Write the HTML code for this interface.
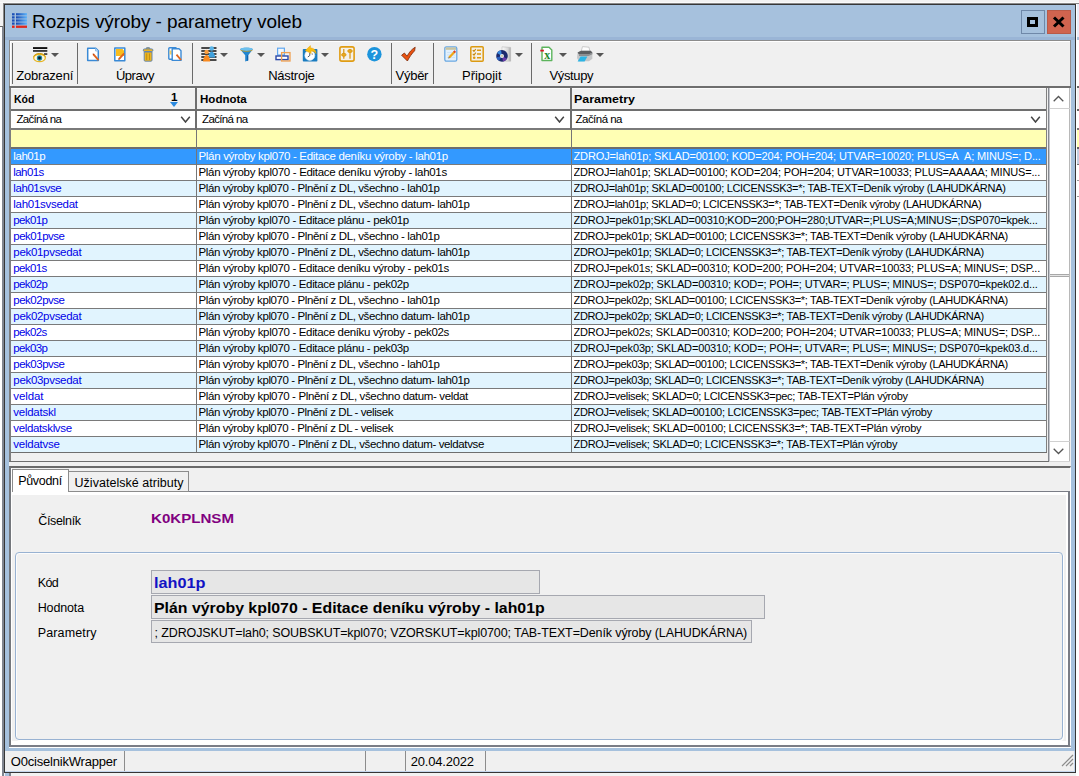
<!DOCTYPE html>
<html lang="cs"><head><meta charset="utf-8"><title>Rozpis výroby - parametry voleb</title>
<style>
*{box-sizing:border-box;margin:0;padding:0}
html,body{width:1079px;height:776px;overflow:hidden;background:#f2f2f2}
body{position:relative;font-family:"Liberation Sans",sans-serif;font-size:12px;color:#000}
.a{position:absolute}
.t{position:absolute;white-space:pre;line-height:16px;height:16px}
#win{left:4px;top:4px;width:1072px;height:769px;background:#a6c1dd;border:1px solid #363636}
#title{left:32px;top:9px;font-size:19px;line-height:24px;height:24px;letter-spacing:-0.2px;color:#000}
#tb{left:9px;top:40px;width:1062px;height:46px;background:#f0f0f0;border-left:1px solid #8c8c8c;border-top:1px solid #8c8c8c;border-right:1px solid #8c8c8c;box-shadow:inset 1px 1px 0 #fff}
.sep{position:absolute;top:43px;width:1px;height:41px;background:#6a6a6a}
.tl{position:absolute;top:67px;font-size:13px;line-height:16px;letter-spacing:-0.35px;white-space:pre;transform-origin:0 0}
.ic{position:absolute}
.dd{position:absolute;width:0;height:0;border-left:4px solid transparent;border-right:4px solid transparent;border-top:4px solid #555}
/* grid */
#grid{left:9px;top:86px;width:1062px;height:376px;background:#f0f0f0}
.r{position:absolute;left:11px;width:1035px;height:16px;background:#fff;border-bottom:1px solid #7a7a7a;font-size:11.5px;line-height:15px;white-space:pre}
.r.alt{background:#e1f4fe}
.r.sel{background:#3399ff;color:#fff}
.r span{position:absolute;top:0;height:15px;overflow:hidden}
.c1{left:2.300px;width:181px;color:#0000e8}
.sel .c1{color:#fff}
.c2{left:187.500px;width:370px}
.c3{left:562.500px;width:472px;font-size:11px}
.vl{position:absolute;width:2px;background:#6e6e6e}
.ft{font-size:11.5px;letter-spacing:-0.3px}
.lb{font-size:12.5px;letter-spacing:-0.3px}
.fld{background:#e6e6e6;border:1px solid #a6a8b0}
.sv{top:751px;width:1px;height:20px;background:#8c8c8c}

</style></head>
<body>
<div id="bgl" class="a" style="left:0;top:26px;width:4px;height:750px;background:#fff;border-top:1px solid #666;border-right:2px solid #80858f"></div>
<div class="a" style="left:0;top:2px;width:1079px;height:1px;background:#fafafa"></div>
<div class="a" style="left:3px;top:3px;width:1076px;height:1px;background:#8a8a8a"></div>
<div class="a" style="left:3px;top:3px;width:1px;height:24px;background:#8a8a8a"></div>
<div id="bgr" class="a" style="left:1076px;top:4px;width:3px;height:772px;background:#fff;border-left:1px solid #fff">
<div class="a" style="left:0;top:0px;width:2px;height:33px;background:#e8ecf8"></div>
<div class="a" style="left:0;top:33px;width:2px;height:3px;background:#a6c1dd"></div>
<div class="a" style="left:0;top:82px;width:2px;height:2px;background:#666"></div>
<div class="a" style="left:0;top:84px;width:2px;height:21px;background:#f0f0f0"></div>
<div class="a" style="left:0;top:105px;width:2px;height:2px;background:#666"></div>
<div class="a" style="left:0;top:124px;width:2px;height:2px;background:#777"></div>
<div class="a" style="left:0;top:126px;width:2px;height:17px;background:#ffffb0"></div>
<div class="a" style="left:0;top:143px;width:2px;height:2px;background:#666"></div>
<div class="a" style="left:0;top:145px;width:2px;height:15px;background:#c4cee0"></div>
<div class="a" style="left:0;top:160px;width:2px;height:1px;background:#777"></div>
<div class="a" style="left:0;top:176px;width:2px;height:1px;background:#999"></div>
<div class="a" style="left:0;top:192px;width:2px;height:1px;background:#999"></div>
</div>
<div class="a" style="left:5px;top:773px;width:4px;height:3px;background:#a6c1dd"></div>
<div class="a" style="left:9px;top:773px;width:2px;height:3px;background:#80858f"></div>
<div id="win" class="a"></div>
<div class="a" style="left:5px;top:37px;width:1070px;height:3px;background:#9ab5d6"></div>
<!-- title bar -->
<svg class="a" style="left:12px;top:13px" width="15" height="15" viewBox="0 0 15 15"><defs><linearGradient id="gbar" x1="0" x2="1"><stop offset="0" stop-color="#1848b0"/><stop offset="1" stop-color="#5cb4fc"/></linearGradient></defs><rect x="0" y="0.2" width="2.600" height="2.200" fill="#1c50b8"/><rect x="4" y="0.2" width="11" height="2.200" fill="url(#gbar)"/><rect x="0" y="3.3" width="2.600" height="2.200" fill="#1c50b8"/><rect x="4" y="3.3" width="11" height="2.200" fill="url(#gbar)"/><rect x="0" y="6.4" width="2.600" height="2.200" fill="#1c50b8"/><rect x="4" y="6.4" width="11" height="2.200" fill="url(#gbar)"/><rect x="0" y="9.5" width="2.600" height="2.200" fill="#1c50b8"/><rect x="4" y="9.5" width="11" height="2.200" fill="url(#gbar)"/><rect x="0" y="12.600" width="2.600" height="2.300" fill="#e22418"/><rect x="4" y="12.600" width="11" height="2.300" fill="#de2a1e"/></svg>
<div class="a" style="left:1021px;top:10px;width:24px;height:24px;border:1px solid #6f88a8;background:#a6c1dd"></div>
<div class="a" style="left:1027px;top:17px;width:11px;height:10px;border:3px solid #000"></div>
<div class="a" style="left:1047px;top:10px;width:24px;height:24px;border:1px solid #b85a48;background:#d0644f"></div>
<svg class="a" style="left:1052px;top:16px" width="14" height="12" viewBox="0 0 14 12"><path d="M2 1.500 L11.500 10.500 M11.500 1.500 L2 10.500" stroke="#000" stroke-width="3" fill="none"/></svg>
<!-- toolbar -->
<div id="tb" class="a"></div>
<div class="sep" style="left:12px"></div>
<div class="sep" style="left:77px"></div>
<div class="sep" style="left:192px"></div>
<div class="sep" style="left:391px"></div>
<div class="sep" style="left:433px"></div>
<div class="sep" style="left:531px"></div>
<div id="icons">
<!-- eye -->
<svg class="ic" style="left:32px;top:46px" width="17" height="17" viewBox="0 0 17 17"><rect x="1" y="1.100" width="14.300" height="1.900" fill="#111"/><rect x="1" y="4.200" width="14.300" height="1.500" fill="#111"/><rect x="12" y="7.300" width="3.300" height="1.500" fill="#222"/><ellipse cx="7.500" cy="11.800" rx="6.500" ry="4.500" fill="#e6b422"/><ellipse cx="7.500" cy="12" rx="5.200" ry="3.100" fill="#fff8e0"/><circle cx="7.500" cy="12" r="2.700" fill="#1d8aa8"/><circle cx="7.500" cy="12" r="1.400" fill="#0a1420"/><path d="M1.500 10.500c3-4 9-4 12 0" stroke="#c89a10" stroke-width="1" fill="none"/></svg>
<div class="dd" style="left:51px;top:53px"></div>
<!-- new -->
<svg class="ic" style="left:86px;top:47px" width="14" height="15" viewBox="0 0 14 15"><path d="M1.700 1.200h8l2.600 2.600v9.800H1.700z" fill="#fff" stroke="#3a8ad6" stroke-width="1.500" stroke-linejoin="round"/><path d="M9.500 1.200v2.800h2.800" fill="#cfe4f8" stroke="#7ab4e8" stroke-width=".8"/><path d="M7.200 7.200l5.300 6" stroke="#e0641c" stroke-width="1.900" fill="none"/><path d="M6.600 6.500l1.600 .6-1 .9z" fill="#a03010"/></svg>
<!-- edit -->
<svg class="ic" style="left:113px;top:47px" width="14" height="15" viewBox="0 0 14 15"><path d="M1.800 1h10v12.800h-10z" fill="#fff" stroke="#3a8ad6" stroke-width="1.500" stroke-linejoin="round"/><path d="M3 2h6.500l1.500 1.500v5.500H3z" fill="#f8bc1c"/><path d="M6 12l5.200-5.600" stroke="#e0641c" stroke-width="1.900"/><path d="M5.300 12.900l.4-1.600 1.100 1z" fill="#803010"/></svg>
<!-- trash -->
<svg class="ic" style="left:142px;top:47px" width="12" height="15" viewBox="0 0 12 15"><rect x="4.300" y=".6" width="3.400" height="1.800" rx=".6" fill="#e8b020" stroke="#5a80b0" stroke-width=".8"/><rect x="1.300" y="1.900" width="9.600" height="2.600" rx="1.200" fill="#ecb420" stroke="#5a80b0" stroke-width=".9"/><path d="M2.200 5h7.800v8.200q0 1-1 1h-5.800q-1 0-1-1z" fill="#ecb420" stroke="#5a80b0" stroke-width=".9"/><path d="M4.700 6.500v6.500M7.500 6.500v6.500" stroke="#c08c10" stroke-width=".9"/></svg>
<!-- copy -->
<svg class="ic" style="left:168px;top:47px" width="14" height="15" viewBox="0 0 14 15"><rect x=".8" y=".8" width="7.600" height="11.400" rx=".8" fill="#fff" stroke="#3a8ad6" stroke-width="1.400"/><rect x="1.600" y="3.500" width="2" height="4" fill="#f8d060"/><path d="M4.200 1.800h6.800l2 2v9.600H4.200z" fill="#fff" stroke="#3a8ad6" stroke-width="1.400" stroke-linejoin="round"/><path d="M8.500 7.600l4.500 5.400" stroke="#e0641c" stroke-width="1.800"/></svg>
<!-- people list -->
<svg class="ic" style="left:201px;top:46px" width="16" height="16" viewBox="0 0 16 16"><path d="M.3 2h15.200M.3 5h15.200M.3 8h15.200M.3 11h15.200M.3 14h15.200" stroke="#111" stroke-width="1.500"/><circle cx="10.700" cy="2.500" r="2.300" fill="#58b4e8"/><path d="M7.300 11.500c.3-3.500 1.800-6 3.400-6s3.100 2.500 3.400 6z" fill="#3ea0dc"/><circle cx="5.600" cy="5.900" r="2.200" fill="#fba040"/><path d="M2 15.500c.3-3.800 1.900-6.500 3.600-6.500s3.300 2.700 3.600 6.500z" fill="#f88a20"/></svg>
<div class="dd" style="left:220px;top:53px"></div>
<!-- funnel -->
<svg class="ic" style="left:240px;top:47px" width="13" height="15" viewBox="0 0 13 15"><path d="M.2 2.500C.2 0 12.800 0 12.800 2.500L8.200 8.300v5.200l-3 .9V8.300z" fill="#2286d0"/><ellipse cx="6.500" cy="2.300" rx="6.200" ry="1.700" fill="#6cc0ee"/><path d="M.6 3.200c3 1.600 8.800 1.600 11.800 0" stroke="#d0a020" stroke-width=".8" fill="none"/><path d="M7 8.300v5.400l1.200-.3V8.300z" fill="#1560a8"/></svg>
<div class="dd" style="left:257px;top:53px"></div>
<!-- windows -->
<svg class="ic" style="left:275px;top:47px" width="16" height="15" viewBox="0 0 16 15"><rect x="2.600" y="1.200" width="6.800" height="6.800" fill="#f4f8fc" stroke="#62a8f0" stroke-width="1.200"/><rect x="1" y="9" width="12" height="3.600" fill="#fff" stroke="#2a48a8" stroke-width="1.400"/><rect x="6.600" y="5.600" width="8.400" height="8.400" fill="none" stroke="#f0a050" stroke-width="1.300"/></svg>
<!-- clock -->
<svg class="ic" style="left:302px;top:45px" width="16" height="17" viewBox="0 0 16 17"><rect x=".8" y="4" width="14.600" height="12.600" rx=".8" fill="#1a7cc0"/><circle cx="7.800" cy="10.400" r="5" fill="#fff" stroke="#d8e8f4" stroke-width=".6"/><path d="M7.800 7.500v3l-2 1.500" stroke="#345" stroke-width=".9" fill="none"/><circle cx="10.300" cy="9" r=".6" fill="#345"/><path d="M3.2 5.6L8.4 .6l.3 2.3c3.4 0 5.6 2.6 5.4 5.8-1.200-2-3-2.700-5.100-2.500l.3 2.400z" fill="#f8bc10" stroke="#e8a008" stroke-width=".4"/></svg>
<div class="dd" style="left:321px;top:53px"></div>
<!-- sliders -->
<svg class="ic" style="left:339px;top:46px" width="16" height="16" viewBox="0 0 16 16"><rect x=".9" y=".9" width="14.200" height="14.200" rx="1.800" fill="#f4f1ea" stroke="#e09c12" stroke-width="1.600"/><path d="M4.800 3v9.800M11 3v9.800" stroke="#d8940c" stroke-width="1.200"/><ellipse cx="4.8" cy="8.8" rx="2.3" ry="1.5" fill="#e8a820" stroke="#d8940c" stroke-width=".8"/><ellipse cx="11" cy="5" rx="2.3" ry="1.5" fill="#e8a820" stroke="#d8940c" stroke-width=".8"/></svg>
<!-- help -->
<svg class="ic" style="left:367px;top:47px" width="15" height="15" viewBox="0 0 15 15"><circle cx="7.400" cy="7.200" r="7.200" fill="#1c94dc"/><text x="7.400" y="11.600" font-family="Liberation Sans, sans-serif" font-weight="bold" font-size="12.500" fill="#fff" text-anchor="middle">?</text></svg>
<!-- check -->
<svg class="ic" style="left:401px;top:46px" width="16" height="16" viewBox="0 0 16 16"><path d="M.6 9.200L3.400 7l2.600 3.200C8.200 6.200 10.800 3.200 14.200 1.200l-.6 3.600C10.800 7.600 8.600 10.800 6.400 15z" fill="#ea5210" stroke="#7a2808" stroke-width=".8" stroke-linejoin="round"/></svg>
<!-- notepad -->
<svg class="ic" style="left:444px;top:46px" width="14" height="16" viewBox="0 0 14 16"><rect x=".8" y=".8" width="12" height="14.400" rx="1.600" fill="#e2f0fc" stroke="#6aa8e2" stroke-width="1.300"/><rect x="1.600" y="1.400" width="10.400" height="2.400" fill="#c8c4a0"/><path d="M3 6.500h8M3 9h8M3 11.500h8" stroke="#c4dcf4" stroke-width=".7"/><path d="M5.200 11.600l5.400-5.800" stroke="#f0a818" stroke-width="2.200"/><path d="M10 6.400l1.200-1.300" stroke="#d84030" stroke-width="2.200"/><path d="M4.300 12.600l.5-1.500 1 .9z" fill="#604020"/></svg>
<!-- checklist -->
<svg class="ic" style="left:470px;top:46px" width="14" height="16" viewBox="0 0 14 16"><rect x=".8" y=".8" width="12.400" height="14.400" rx="1" fill="#f3f0e8" stroke="#dc9a10" stroke-width="1.500"/><path d="M7 4.300h4M7 8h4M7 11.700h4" stroke="#dc9a10" stroke-width="1.500"/><path d="M2.800 4.200l1.200 1.200 1.800-2.400M2.800 7.900l1.200 1.200 1.800-2.400" stroke="#c88a0c" stroke-width="1.100" fill="none"/><circle cx="4.200" cy="11.700" r="1.300" fill="#dc9a10"/></svg>
<!-- cd -->
<svg class="ic" style="left:496px;top:46px" width="16" height="16" viewBox="0 0 16 16"><defs><linearGradient id="gcase" x1="0" x2="1"><stop offset="0" stop-color="#fafafa"/><stop offset=".7" stop-color="#d8d8d8"/><stop offset="1" stop-color="#a8a8a8"/></linearGradient></defs><path d="M6 .8l8.600.6v13.800H6z" fill="url(#gcase)" stroke="#b4b4b4" stroke-width=".5"/><circle cx="6" cy="9.900" r="5.800" fill="#1c2a6c"/><path d="M6 9.900L1 7A5.800 5.800 0 0 1 5 4.200z" fill="#3a8ae0"/><path d="M6 9.900l5 2.900A5.800 5.800 0 0 1 7 15.600z" fill="#6a3aa8"/><path d="M6 9.900L.4 11.500A5.800 5.800 0 0 0 3 14.800z" fill="#2a60c0"/><circle cx="6" cy="9.900" r="2" fill="#e8ecf0"/><circle cx="6" cy="9.900" r=".9" fill="#c8c090"/></svg>
<div class="dd" style="left:515px;top:53px"></div>
<!-- excel -->
<svg class="ic" style="left:540px;top:46px" width="13" height="16" viewBox="0 0 13 16"><path d="M2 1.300h7l2.800 2.800v10.400H2z" fill="#fff" stroke="#5cb45c" stroke-width="1.400" stroke-linejoin="round"/><rect x=".3" y="3.700" width="3.600" height="1.800" fill="#d41c24"/><text x="7.200" y="13.400" font-family="Liberation Serif, serif" font-weight="bold" font-size="12" fill="#1e8a2e" text-anchor="middle">x</text></svg>
<div class="dd" style="left:559px;top:53px"></div>
<!-- printer -->
<svg class="ic" style="left:576px;top:46px" width="17" height="16" viewBox="0 0 17 16"><path d="M6.500 .6l6.500 .6 1 4.800H5z" fill="#fcfcfc" stroke="#b8b8b8" stroke-width=".7"/><path d="M1.600 6.600L5 4.800h9.800l1.600 2v6l-3.400 2.400H2.800L1 12z" fill="#c4c6c8"/><path d="M1.600 6.600L5 4.800h9.800l1.600 2-3.800 1.600H3z" fill="#5c5e60"/><path d="M3 8.400h9.600l3.800-1.800v1.600l-3.800 1.800H3z" fill="#8c8e90"/><path d="M4.600 10.400h6.800l-2.800 5H1.600z" fill="#2cb4e4"/></svg>
<div class="dd" style="left:596px;top:53px"></div>
</div>
<!-- grid -->
<div id="grid" class="a"></div>
<div class="a" style="left:9px;top:86px;width:1062px;height:2px;background:#6e6e6e"></div>
<div class="a" style="left:9px;top:88px;width:2px;height:374px;background:#7e7e7e"></div>
<div class="a" style="left:11px;top:88px;width:1036px;height:21px;background:#f0f0f0;border-top:1px solid #fbfbfb"></div>
<div class="a" style="left:11px;top:109px;width:1036px;height:2px;background:#6e6e6e"></div>
<div class="a" style="left:11px;top:111px;width:1036px;height:17px;background:#fff"></div>
<div class="a" style="left:11px;top:128px;width:1036px;height:2px;background:#7a7a7a"></div>
<div class="a" style="left:11px;top:130px;width:1036px;height:17px;background:#ffffb4"></div>
<div class="a" style="left:11px;top:147px;width:1036px;height:2px;background:#6e6e6e"></div>
<div class="a" style="left:170px;top:102px;width:0;height:0;border-left:4.5px solid transparent;border-right:4.5px solid transparent;border-top:5px solid #2a8ae0"></div>
<svg class="a" style="left:179.500px;top:116px" width="11" height="7" viewBox="0 0 11 7"><path d="M1.200.7L5.500 6 9.800.7" stroke="#444" stroke-width="1.500" fill="none"/></svg>
<svg class="a" style="left:553.500px;top:116px" width="11" height="7" viewBox="0 0 11 7"><path d="M1.200.7L5.500 6 9.800.7" stroke="#444" stroke-width="1.500" fill="none"/></svg>
<svg class="a" style="left:1029.500px;top:116px" width="11" height="7" viewBox="0 0 11 7"><path d="M1.200.7L5.500 6 9.800.7" stroke="#444" stroke-width="1.500" fill="none"/></svg>

<div id="rows">
<div class="r sel" style="top:149px"><span class="c1" style="letter-spacing:-0.424px">lah01p</span><span class="c2" style="letter-spacing:-0.312px">Plán výroby kpl070 - Editace deníku výroby - lah01p</span><span class="c3" style="letter-spacing:-0.121px">ZDROJ=lah01p; SKLAD=00100; KOD=204; POH=204; UTVAR=10020; PLUS=A&nbsp; A; MINUS=; D...</span></div>
<div class="r" style="top:165px"><span class="c1" style="letter-spacing:-0.582px">lah01s</span><span class="c2" style="letter-spacing:-0.320px">Plán výroby kpl070 - Editace deníku výroby - lah01s</span><span class="c3" style="letter-spacing:-0.163px">ZDROJ=lah01p; SKLAD=00100; KOD=204; POH=204; UTVAR=10033; PLUS=AAAAA; MINUS=...</span></div>
<div class="r alt" style="top:181px"><span class="c1" style="letter-spacing:-0.422px">lah01svse</span><span class="c2" style="letter-spacing:-0.396px">Plán výroby kpl070 - Plnění z DL, všechno - lah01p</span><span class="c3" style="letter-spacing:-0.307px">ZDROJ=lah01p; SKLAD=00100; LCICENSSK3=*; TAB-TEXT=Deník výroby (LAHUDKÁRNA)</span></div>
<div class="r" style="top:197px"><span class="c1" style="letter-spacing:-0.282px">lah01svsedat</span><span class="c2" style="letter-spacing:-0.396px">Plán výroby kpl070 - Plnění z DL, všechno datum- lah01p</span><span class="c3" style="letter-spacing:-0.320px">ZDROJ=lah01p; SKLAD=0; LCICENSSK3=*; TAB-TEXT=Deník výroby (LAHUDKÁRNA)</span></div>
<div class="r alt" style="top:213px"><span class="c1" style="letter-spacing:-0.622px">pek01p</span><span class="c2" style="letter-spacing:-0.340px">Plán výroby kpl070 - Editace plánu - pek01p</span><span class="c3" style="letter-spacing:-0.181px">ZDROJ=pek01p;SKLAD=00310;KOD=200;POH=280;UTVAR=;PLUS=A;MINUS=;DSP070=kpek...</span></div>
<div class="r" style="top:229px"><span class="c1" style="letter-spacing:-0.492px">pek01pvse</span><span class="c2" style="letter-spacing:-0.396px">Plán výroby kpl070 - Plnění z DL, všechno - lah01p</span><span class="c3" style="letter-spacing:-0.316px">ZDROJ=pek01p; SKLAD=00100; LCICENSSK3=*; TAB-TEXT=Deník výroby (LAHUDKÁRNA)</span></div>
<div class="r alt" style="top:245px"><span class="c1" style="letter-spacing:-0.302px">pek01pvsedat</span><span class="c2" style="letter-spacing:-0.396px">Plán výroby kpl070 - Plnění z DL, všechno datum- lah01p</span><span class="c3" style="letter-spacing:-0.329px">ZDROJ=pek01p; SKLAD=0; LCICENSSK3=*; TAB-TEXT=Deník výroby (LAHUDKÁRNA)</span></div>
<div class="r" style="top:261px"><span class="c1" style="letter-spacing:-0.649px">pek01s</span><span class="c2" style="letter-spacing:-0.340px">Plán výroby kpl070 - Editace deníku výroby - pek01s</span><span class="c3" style="letter-spacing:-0.166px">ZDROJ=pek01s; SKLAD=00310; KOD=200; POH=204; UTVAR=10033; PLUS=A; MINUS=; DSP...</span></div>
<div class="r alt" style="top:277px"><span class="c1" style="letter-spacing:-0.622px">pek02p</span><span class="c2" style="letter-spacing:-0.340px">Plán výroby kpl070 - Editace plánu - pek02p</span><span class="c3" style="letter-spacing:-0.156px">ZDROJ=pek02p; SKLAD=00310; KOD=; POH=; UTVAR=; PLUS=; MINUS=; DSP070=kpek02.d...</span></div>
<div class="r" style="top:293px"><span class="c1" style="letter-spacing:-0.492px">pek02pvse</span><span class="c2" style="letter-spacing:-0.396px">Plán výroby kpl070 - Plnění z DL, všechno - lah01p</span><span class="c3" style="letter-spacing:-0.316px">ZDROJ=pek02p; SKLAD=00100; LCICENSSK3=*; TAB-TEXT=Deník výroby (LAHUDKÁRNA)</span></div>
<div class="r alt" style="top:309px"><span class="c1" style="letter-spacing:-0.302px">pek02pvsedat</span><span class="c2" style="letter-spacing:-0.396px">Plán výroby kpl070 - Plnění z DL, všechno datum- lah01p</span><span class="c3" style="letter-spacing:-0.329px">ZDROJ=pek02p; SKLAD=0; LCICENSSK3=*; TAB-TEXT=Deník výroby (LAHUDKÁRNA)</span></div>
<div class="r" style="top:325px"><span class="c1" style="letter-spacing:-0.649px">pek02s</span><span class="c2" style="letter-spacing:-0.340px">Plán výroby kpl070 - Editace deníku výroby - pek02s</span><span class="c3" style="letter-spacing:-0.166px">ZDROJ=pek02s; SKLAD=00310; KOD=200; POH=204; UTVAR=10033; PLUS=A; MINUS=; DSP...</span></div>
<div class="r alt" style="top:341px"><span class="c1" style="letter-spacing:-0.622px">pek03p</span><span class="c2" style="letter-spacing:-0.340px">Plán výroby kpl070 - Editace plánu - pek03p</span><span class="c3" style="letter-spacing:-0.156px">ZDROJ=pek03p; SKLAD=00310; KOD=; POH=; UTVAR=; PLUS=; MINUS=; DSP070=kpek03.d...</span></div>
<div class="r" style="top:357px"><span class="c1" style="letter-spacing:-0.492px">pek03pvse</span><span class="c2" style="letter-spacing:-0.396px">Plán výroby kpl070 - Plnění z DL, všechno - lah01p</span><span class="c3" style="letter-spacing:-0.316px">ZDROJ=pek03p; SKLAD=00100; LCICENSSK3=*; TAB-TEXT=Deník výroby (LAHUDKÁRNA)</span></div>
<div class="r alt" style="top:373px"><span class="c1" style="letter-spacing:-0.302px">pek03pvsedat</span><span class="c2" style="letter-spacing:-0.396px">Plán výroby kpl070 - Plnění z DL, všechno datum- lah01p</span><span class="c3" style="letter-spacing:-0.329px">ZDROJ=pek03p; SKLAD=0; LCICENSSK3=*; TAB-TEXT=Deník výroby (LAHUDKÁRNA)</span></div>
<div class="r" style="top:389px"><span class="c1" style="letter-spacing:-0.115px">veldat</span><span class="c2" style="letter-spacing:-0.357px">Plán výroby kpl070 - Plnění z DL, všechno datum- veldat</span><span class="c3" style="letter-spacing:-0.301px">ZDROJ=velisek; SKLAD=0; LCICENSSK3=pec; TAB-TEXT=Plán výroby</span></div>
<div class="r alt" style="top:405px"><span class="c1" style="letter-spacing:-0.261px">veldatskl</span><span class="c2" style="letter-spacing:-0.411px">Plán výroby kpl070 - Plnění z DL - velisek</span><span class="c3" style="letter-spacing:-0.288px">ZDROJ=velisek; SKLAD=00100; LCICENSSK3=pec; TAB-TEXT=Plán výroby</span></div>
<div class="r" style="top:421px"><span class="c1" style="letter-spacing:-0.353px">veldatsklvse</span><span class="c2" style="letter-spacing:-0.411px">Plán výroby kpl070 - Plnění z DL - velisek</span><span class="c3" style="letter-spacing:-0.251px">ZDROJ=velisek; SKLAD=00100; LCICENSSK3=*; TAB-TEXT=Plán výroby</span></div>
<div class="r alt" style="top:437px"><span class="c1" style="letter-spacing:-0.244px">veldatvse</span><span class="c2" style="letter-spacing:-0.368px">Plán výroby kpl070 - Plnění z DL, všechno datum- veldatvse</span><span class="c3" style="letter-spacing:-0.262px">ZDROJ=velisek; SKLAD=0; LCICENSSK3=*; TAB-TEXT=Plán výroby</span></div>
</div>
<!-- column separators + scrollbar -->
<div class="vl" style="left:195px;top:88px;height:42px"></div>
<div class="vl" style="left:196px;top:130px;height:323px;width:1px;background:#767676"></div>
<div class="vl" style="left:570px;top:88px;height:42px"></div>
<div class="vl" style="left:571px;top:130px;height:323px;width:1px;background:#767676"></div>
<div class="vl" style="left:1046px;top:88px;height:365px;width:1px;background:#808080"></div>
<div class="a" style="left:11px;top:452px;width:1036px;height:1px;background:#6e6e6e"></div>
<div class="a" style="left:1048px;top:88px;width:22px;height:373px;background:#fff;border-left:1px solid #85888f;box-shadow:inset 1px 0 0 #c4c6cc;border-right:1px solid #b8b8b8"></div>
<div class="a" style="left:1050px;top:108px;width:20px;height:1px;background:#d0d0d0"></div>
<div class="a" style="left:1050px;top:274px;width:19px;height:3px;background:#e4e4e4;border-top:1px solid #a8a8a8;border-bottom:1px solid #a8a8a8"></div>
<div class="a" style="left:1050px;top:441px;width:20px;height:1px;background:#d0d0d0"></div>
<svg class="a" style="left:1053px;top:95px" width="11" height="7" viewBox="0 0 11 7"><path d="M.7 6.300L5.500 1.500 10.300 6.300" stroke="#555" stroke-width="1.300" fill="none"/></svg>
<svg class="a" style="left:1053px;top:448px" width="11" height="7" viewBox="0 0 11 7"><path d="M.7.7L5.500 5.500 10.300.7" stroke="#555" stroke-width="1.300" fill="none"/></svg>
<!-- bottom panel -->
<div class="a" style="left:9px;top:461px;width:1040px;height:1px;background:#6e6e6e"></div>
<div class="a" style="left:1049px;top:461px;width:21px;height:1px;background:#d4d4d4"></div>
<div class="a" style="left:9px;top:462px;width:1062px;height:4px;background:#f0f0f0"></div>
<div class="a" style="left:9px;top:466px;width:1062px;height:281px;background:#f0f0f0;border-left:2px solid #74777c;border-top:2px solid #6a6a6a;border-bottom:2px solid #7a7d86;border-right:1px solid #fff"></div>
<div class="a" style="left:9px;top:747px;width:1062px;height:1px;background:#fff"></div>
<div class="a" style="left:11px;top:468px;width:1px;height:277px;background:#fff"></div>
<div class="a" style="left:1068px;top:491px;width:2px;height:256px;background:#7a7d86"></div>
<div class="a" style="left:69px;top:491px;width:1001px;height:1px;background:#7a7d86"></div>
<div class="a" style="left:12px;top:492px;width:1056px;height:3px;background:#fff"></div>
<div class="a" style="left:1066px;top:492px;width:2px;height:253px;background:#fff"></div>
<div class="a" style="left:12px;top:469px;width:57px;height:23px;background:#fff;border:1px solid #8c8c8c;border-bottom:none"></div>
<div class="a" style="left:68px;top:471px;width:121px;height:21px;background:#f0f0f0;border:1px solid #8c8c8c"></div>
<div class="a" style="left:15px;top:552px;width:1048px;height:188px;border:1px solid #98b2d2;border-radius:4px;background:#f0f0f0;box-shadow:inset 1px 1px 0 #fcfcfc,1px 1px 0 #fff"></div>
<div class="a" style="left:12px;top:741px;width:1056px;height:4px;background:#fff"></div>
<div class="a fld" style="left:151px;top:570px;width:389px;height:24px"></div>
<div class="a fld" style="left:151px;top:595px;width:614px;height:24px"></div>
<div class="a fld" style="left:151px;top:620px;width:601px;height:23px"></div>
<!-- status bar -->
<div class="a" style="left:5px;top:751px;width:1070px;height:21px;background:#f0f0f0;border-bottom:1px solid #c4d6ec;border-right:1px solid #c4d6ec"></div>
<div class="a sv" style="left:124px"></div>
<div class="a sv" style="left:365px"></div>
<div class="a sv" style="left:405px"></div>
<div class="a sv" style="left:485px"></div>
<svg class="a" style="left:1061px;top:754px" width="13" height="13" viewBox="0 0 13 13"><path d="M12 1L1 12M12 5L5 12M12 9L9 12" stroke="#8c8c8c" stroke-width="1.2"/></svg>

<div id="texts">
<div class="t" style="left:32.1px;top:9.1px;font-size:19px;line-height:25px;height:25px;letter-spacing:-0.079px">Rozpis výroby - parametry voleb</div>
<div class="t" style="left:16.3px;top:67.2px;font-size:13px;line-height:17px;height:17px;letter-spacing:-0.194px">Zobrazení</div>
<div class="t" style="left:116.0px;top:67.2px;font-size:13px;line-height:17px;height:17px;letter-spacing:-0.515px">Úpravy</div>
<div class="t" style="left:268.2px;top:67.2px;font-size:13px;line-height:17px;height:17px;letter-spacing:-0.265px">Nástroje</div>
<div class="t" style="left:395.5px;top:67.2px;font-size:13px;line-height:17px;height:17px;letter-spacing:-0.254px">Výběr</div>
<div class="t" style="left:462.0px;top:67.2px;font-size:13px;line-height:17px;height:17px;letter-spacing:-0.031px">Připojit</div>
<div class="t" style="left:549.5px;top:67.2px;font-size:13px;line-height:17px;height:17px;letter-spacing:-0.364px">Výstupy</div>
<div class="t" style="left:14.0px;top:91.7px;font-size:11px;line-height:14px;height:14px;font-weight:bold;transform-origin:0 50%;transform:scaleX(0.9584)">Kód</div>
<div class="t" style="left:200.0px;top:91.7px;font-size:11px;line-height:14px;height:14px;font-weight:bold;transform-origin:0 50%;transform:scaleX(1.0491)">Hodnota</div>
<div class="t" style="left:573.5px;top:91.7px;font-size:11px;line-height:14px;height:14px;font-weight:bold;transform-origin:0 50%;transform:scaleX(1.1332)">Parametry</div>
<div class="t" style="left:170.5px;top:90.2px;font-size:11px;line-height:14px;height:14px;font-weight:bold;transform-origin:0 50%;transform:scaleX(1.0612)">1</div>
<div class="t" style="left:16.5px;top:112.0px;font-size:11.5px;line-height:15px;height:15px;letter-spacing:-0.712px">Začíná na</div>
<div class="t" style="left:202.0px;top:112.0px;font-size:11.5px;line-height:15px;height:15px;letter-spacing:-0.628px">Začíná na</div>
<div class="t" style="left:575.5px;top:112.0px;font-size:11.5px;line-height:15px;height:15px;letter-spacing:-0.517px">Začíná na</div>
<div class="t" style="left:18.2px;top:473.0px;font-size:12.5px;line-height:16px;height:16px;letter-spacing:-0.304px">Původní</div>
<div class="t" style="left:74.5px;top:475.2px;font-size:12.5px;line-height:16px;height:16px;letter-spacing:0.031px">Uživatelské atributy</div>
<div class="t" style="left:38.2px;top:512.7px;font-size:12.5px;line-height:16px;height:16px;letter-spacing:-0.332px">Číselník</div>
<div class="t" style="left:150.8px;top:509.6px;font-size:13.5px;line-height:18px;height:18px;font-weight:bold;transform-origin:0 50%;transform:scaleX(1.1176);color:#800080">K0KPLNSM</div>
<div class="t" style="left:37.7px;top:574.9px;font-size:12.5px;line-height:16px;height:16px;letter-spacing:-0.617px">Kód</div>
<div class="t" style="left:37.7px;top:600.0px;font-size:12.5px;line-height:16px;height:16px;letter-spacing:-0.138px">Hodnota</div>
<div class="t" style="left:37.7px;top:624.7px;font-size:12.5px;line-height:16px;height:16px;letter-spacing:0.138px">Parametry</div>
<div class="t" style="left:154.1px;top:572.8px;font-size:15px;line-height:20px;height:20px;font-weight:bold;transform-origin:0 50%;transform:scaleX(1.0835);color:#1212c4">lah01p</div>
<div class="t" style="left:154.1px;top:597.8px;font-size:15px;line-height:20px;height:20px;font-weight:bold;transform-origin:0 50%;transform:scaleX(1.0579)">Plán výroby kpl070 - Editace deníku výroby - lah01p</div>
<div class="t" style="left:154.5px;top:624.7px;font-size:12.5px;line-height:16px;height:16px;letter-spacing:-0.113px">; ZDROJSKUT=lah0; SOUBSKUT=kpl070; VZORSKUT=kpl0700; TAB-TEXT=Deník výroby (LAHUDKÁRNA)</div>
<div class="t" style="left:10.8px;top:753.0px;font-size:13px;line-height:17px;height:17px;letter-spacing:-0.200px">O0ciselnikWrapper</div>
<div class="t" style="left:410.8px;top:753.0px;font-size:13px;line-height:17px;height:17px;letter-spacing:-0.218px">20.04.2022</div>
</div>
</body></html>
